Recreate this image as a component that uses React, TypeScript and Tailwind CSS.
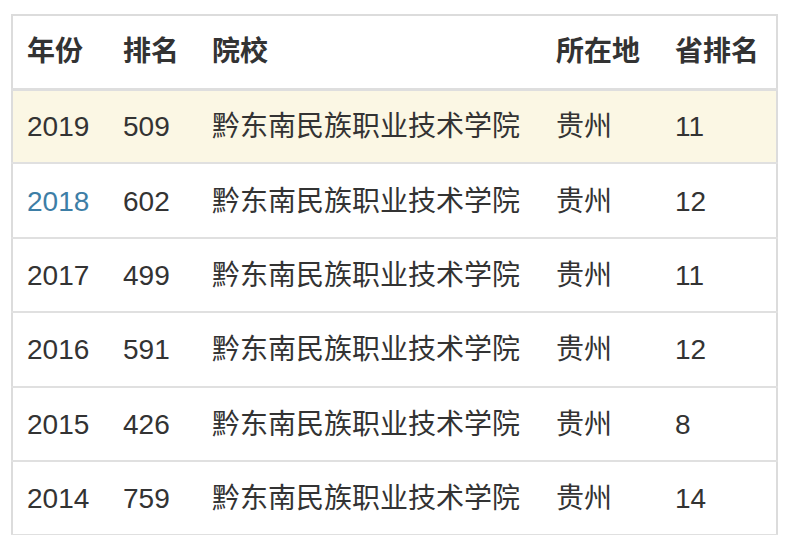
const rows = [
  { year: "2019", rank: "509", prov: "11", warn: true },
  { year: "2018", rank: "602", prov: "12", link: true },
  { year: "2017", rank: "499", prov: "11" },
  { year: "2016", rank: "591", prov: "12" },
  { year: "2015", rank: "426", prov: "8" },
  { year: "2014", rank: "759", prov: "14" },
];

export default function App() {
  return (
    <div
      className="w-[786px] h-[535px] bg-white pt-[14px] pl-[11px] overflow-hidden"
      style={{ fontFamily: '"Liberation Sans", "Noto Sans CJK SC", sans-serif' }}
    >
      <table className="w-[767px] border-2 border-[#dcdcdc] border-collapse text-[28px] text-[#333]">
        <colgroup>
          <col className="w-[97px]" />
          <col className="w-[89px]" />
          <col className="w-[344px]" />
          <col className="w-[119px]" />
          <col />
        </colgroup>
        <thead>
          <tr className="h-[74px] border-b-[3px] border-[#dedede]">
            <th className="pl-[14px] text-left font-bold">年份</th>
            <th className="pl-[14px] text-left font-bold">排名</th>
            <th className="pl-[14px] text-left font-bold">院校</th>
            <th className="pl-[14px] text-left font-bold">所在地</th>
            <th className="pl-[14px] text-left font-bold">省排名</th>
          </tr>
        </thead>
        <tbody>
          {rows.map((r) => (
            <tr
              key={r.year}
              className={
                "h-[74.4px] border-b-2 border-[#e0e0e0] " + (r.warn ? "bg-[#fbf7e4]" : "")
              }
            >
              <td className={"pl-[14px] pt-[2px] " + (r.link ? "text-[#3d7ea6]" : "")}>{r.year}</td>
              <td className="pl-[14px] pt-[2px]">{r.rank}</td>
              <td className="pl-[14px] pt-[2px]">黔东南民族职业技术学院</td>
              <td className="pl-[14px] pt-[2px]">贵州</td>
              <td className="pl-[14px] pt-[2px]">{r.prov}</td>
            </tr>
          ))}
        </tbody>
      </table>
    </div>
  );
}
